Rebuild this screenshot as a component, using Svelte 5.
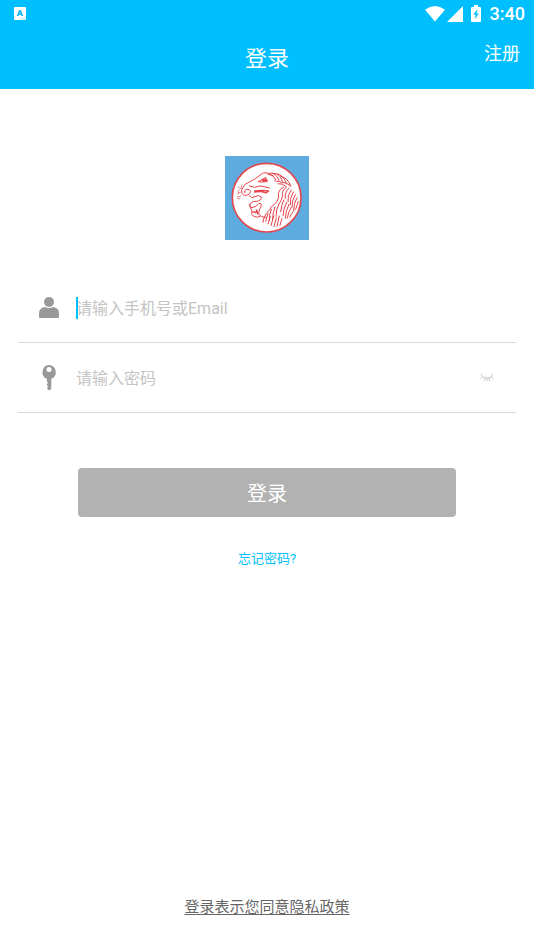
<script lang="ts">
  let account = $state("");
  let password = $state("");
  let showPassword = $state(false);

  const ready = $derived(account !== "" && password !== "");
</script>

<div class="page">
  <header>
    <div class="status">
      <svg class="app-icon" aria-hidden="true" width="12" height="13" viewBox="0 0 12 13">
        <rect width="12" height="13" rx="1" fill="#fff" />
        <path
          d="M5 3 H7 L9.2 9 H7.4 L7 8 H5 L4.6 9 H2.8 Z M5.5 6.7 H6.5 L6 5.2 Z"
          fill="#12baf3"
          fill-rule="evenodd"
        />
        <path d="M6.5 11.8 H11" stroke="#8fe0ff" stroke-width="1" />
      </svg>
      <div class="system">
        <svg aria-hidden="true" width="20" height="16" viewBox="0 0 20 16" fill="#fff">
          <path d="M0 3.7 Q10 -3.7 20 3.7 L10 15.6 Z" />
        </svg>
        <svg aria-hidden="true" width="16" height="16" viewBox="0 0 16 16" fill="#fff">
          <path d="M16 0 V16 H0 Z" />
        </svg>
        <svg class="battery" aria-hidden="true" width="10" height="17" viewBox="0 0 10 17">
          <path d="M3 0 H7 V2 H9 Q10 2 10 3 V16 Q10 17 9 17 H1 Q0 17 0 16 V3 Q0 2 1 2 H3 Z" fill="#fff" />
          <path d="M6.4 4 L2.3 9.8 H4.6 L4 14.2 L7.8 8.4 H5.6 Z" fill="#00bfff" />
        </svg>
        <span class="clock">3:40</span>
      </div>
    </div>
    <div class="titlebar">
      <h1>登录</h1>
      <a class="register" href="#register">注册</a>
    </div>
  </header>

  <main>
    <svg class="logo" role="img" aria-label="Lion" width="84" height="84" viewBox="15 18 252 252">
      <rect x="15" y="18" width="252" height="252" fill="#5dabdf" />
      <circle cx="140" cy="143" r="103" fill="#fff" stroke="#e2494f" stroke-width="5" />
      <g fill="none" stroke="#e5454a" stroke-width="3" stroke-linecap="round" stroke-linejoin="round">
        <!-- brow, nose and eye -->
        <path d="M68 114 Q72 101 88 96 Q106 88 117 78 Q126 67 139 68 Q150 71 160 78" />
        <path d="M68 114 Q62 120 66 130 Q71 138 80 136 Q91 133 92 124 Q90 117 80 118 Q72 121 74 128" />
        <path d="M115 95 Q126 89 137 82 L143 94 Q129 98 115 95" />
        <path d="M127 89 L138 87 L139 93 L130 94 Z" fill="#e5454a" />
        <!-- upper lip and open mouth -->
        <path d="M88 108 Q104 116 120 108 Q134 109 148 114" />
        <path d="M104 123 Q124 120 146 123 L138 129 Q122 122 104 126" stroke-width="4" />
        <path d="M88 138 Q94 147 105 140 Q116 132 124 141 Q124 151 111 154 Q99 151 91 161" />
        <path d="M91 161 Q86 170 96 173 Q110 171 117 160 Q125 158 124 168 Q116 181 116 191 Q120 201 138 202" />
        <path d="M88 164 L96 184 Q92 197 105 200 Q113 204 121 199" />
        <path d="M97 185 L108 188 L110 180 L114 192" stroke-width="4" />
        <!-- crown of the mane -->
        <path d="M142 72 Q153 66 166 71 Q179 71 187 80 Q202 86 208 99 L212 108" />
        <path d="M147 73 Q162 75 166 87 M158 70 Q174 77 176 91 M170 72 Q185 79 187 96 M181 77 Q196 85 199 102" />
        <path d="M166 87 Q161 92 170 95 Q177 90 184 98 Q194 94 212 108 M174 101 Q187 99 198 109" />
        <!-- ear and strands behind the cheek -->
        <path d="M191 111 Q178 116 175 130 Q179 140 172 153 Q165 163 154 170 Q150 182 139 190 L132 204" />
        <path d="M199 112 Q184 122 188 137 Q185 151 176 164 M207 114 Q193 128 196 145 M214 120 Q201 135 204 155" />
        <path d="M220 126 Q208 145 211 164 M226 134 Q215 151 216 171 M231 143 Q222 158 221 179 M235 154 L227 178" />
        <!-- lower mane -->
        <path d="M191 150 Q184 165 182 185 M200 157 Q190 176 189 197 M207 163 Q196 183 196 205" />
        <path d="M214 171 Q204 187 202 204 M222 180 Q214 192 209 202" />
        <path d="M176 164 Q168 178 168 199 M165 171 Q158 187 158 207 M154 178 Q148 194 147 213" />
        <path d="M144 190 L137 214 M151 200 L144 222 M161 198 L153 227 M169 204 L162 230 M178 198 L171 229 M186 205 L180 226" />
        <path d="M132 204 L129 217" />
        <!-- whiskers -->
        <path
          d="M54 110 L61 115 M65 105 L63 116 M58 119 Q51 124 56 129 M52 132 L61 127 M52 141 L63 138 M53 146 L60 146"
          stroke-width="2"
        />
      </g>
    </svg>

    <form onsubmit={(e) => e.preventDefault()}>
      <div class="field">
        <label for="account" aria-label="手机号或Email">
          <svg aria-hidden="true" width="22" height="22" viewBox="0 0 22 22" fill="#999">
            <circle cx="11" cy="5" r="5" />
            <path d="M1 20 V16 Q1 11 7 10 Q11 12 15 10 Q21 11 21 16 V20 Q21 21 20 21 H2 Q1 21 1 20 Z" />
          </svg>
        </label>
        <div class="entry">
          <input id="account" type="text" placeholder="请输入手机号或Email" bind:value={account} />
          {#if account === ""}
            <span class="cursor"></span>
          {/if}
        </div>
      </div>

      <div class="field">
        <label for="password" aria-label="密码">
          <svg aria-hidden="true" width="22" height="26" viewBox="0 0 22 26" fill="#999">
            <path
              fill-rule="evenodd"
              d="M11 0 A7.3 7.3 0 0 1 13.3 14 V23.5 L11.5 25.5 L9.3 24 V22.5 L10.3 21.7 L9 20.6 V18.8 L10.3 18 L9 17 V14 A7.3 7.3 0 0 1 11 0 Z M11 2 A2.5 2.5 0 0 0 11 7 A2.5 2.5 0 0 0 11 2 Z"
            />
          </svg>
        </label>
        <div class="entry">
          <input
            id="password"
            type={showPassword ? "text" : "password"}
            placeholder="请输入密码"
            bind:value={password}
          />
        </div>
        <button
          type="button"
          class="eye"
          aria-label="显示密码"
          onclick={() => (showPassword = !showPassword)}
        >
          <svg aria-hidden="true" width="14" height="10" viewBox="0 0 14 10" fill="none" stroke="#c8c8c8">
            <path d="M1 1 Q2 5 7 5 Q12 5 13 1 M2.5 3.5 L1 5.5 M5 5 L4.3 8 M9 5 L9.7 8 M11.5 3.5 L13 5.5 M7 5 V8.5" />
          </svg>
        </button>
      </div>

      <button type="submit" class="submit" class:ready>登录</button>
    </form>

    <a class="forgot" href="#forgot">忘记密码?</a>
  </main>

  <footer>
    <a href="#privacy">登录表示您同意隐私政策</a>
  </footer>
</div>

<style>
  :global(body) {
    margin: 0;
    background: #fff;
  }

  .page {
    min-height: 100vh;
    display: flex;
    flex-direction: column;
    font-family: Roboto, "Noto Sans CJK SC", sans-serif;
  }

  header {
    background: #00bfff;
    color: #fff;
  }

  .status {
    display: flex;
    justify-content: space-between;
    align-items: center;
    height: 27px;
    padding: 0 9px 0 14px;
  }

  .system {
    display: flex;
    align-items: center;
    gap: 2px;
  }

  .battery {
    margin: 0 7px 0 6px;
  }

  .clock {
    font-size: 18px;
    font-weight: 500;
    line-height: 28px;
  }

  .titlebar {
    display: grid;
    grid-template-columns: 1fr auto 1fr;
    padding: 0 14px;
    height: 62px;
  }

  h1 {
    grid-column: 2;
    margin: 0;
    font-size: 22px;
    font-weight: 400;
    line-height: 64px;
  }

  .register {
    justify-self: end;
    font-size: 18px;
    line-height: 54px;
    color: #fff;
    text-decoration: none;
  }

  main {
    flex: 1;
    display: flex;
    flex-direction: column;
    align-items: center;
    padding: 67px 18px 0;
  }

  .logo {
    display: block;
  }

  form {
    align-self: stretch;
    display: flex;
    flex-direction: column;
    margin-top: 33px;
  }

  .field {
    display: flex;
    align-items: center;
    height: 69px;
    padding: 0 20px;
    border-bottom: 1px solid #d9d9d9;
  }

  .field label {
    display: flex;
    margin-right: 16px;
  }

  .entry {
    position: relative;
    flex: 1;
    display: flex;
  }

  input {
    width: 100%;
    padding: 2px 0 0;
    border: 0;
    outline: 0;
    background: none;
    font-family: inherit;
    font-size: 16px;
    line-height: 24px;
    color: #333;
    caret-color: #00bfff;
  }

  input::placeholder {
    color: #c4c4c4;
    opacity: 1;
  }

  .cursor {
    position: absolute;
    left: 0;
    top: 2px;
    width: 2px;
    height: 22px;
    background: #00bfff;
    pointer-events: none;
  }

  .eye {
    display: flex;
    padding: 2px;
    border: 0;
    background: none;
    cursor: pointer;
  }

  .submit {
    margin: 55px 60px 0;
    height: 49px;
    border: 0;
    border-radius: 4px;
    background: #b2b2b2;
    color: #fff;
    font-family: inherit;
    font-size: 20px;
  }

  .submit.ready {
    background: #00bfff;
  }

  .forgot {
    margin-top: 32px;
    font-size: 13px;
    line-height: 20px;
    color: #00bfff;
    text-decoration: none;
  }

  footer {
    padding-bottom: 31px;
    text-align: center;
  }

  footer a {
    font-size: 15px;
    line-height: 24px;
    color: #666;
    text-decoration: underline;
    text-underline-offset: 2px;
  }
</style>
